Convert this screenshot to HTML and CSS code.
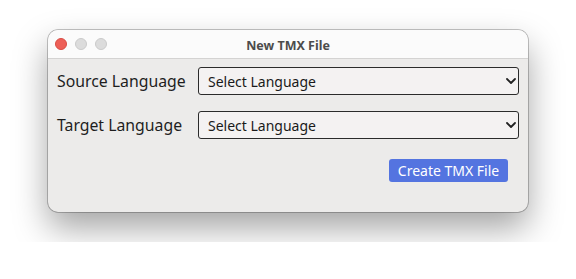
FILE: index.html
```html
<!DOCTYPE html>
<html>
<head>
<meta charset="utf-8">
<link rel="stylesheet" href="styles.css">
</head>
<body>
<div class="window">
  <div class="titlebar">
    <div class="lights">
      <span class="light red"></span>
      <span class="light gray"></span>
      <span class="light gray"></span>
    </div>
    <div class="title">New TMX File</div>
    <div></div>
  </div>
  <div class="content">
    <div class="row">
      <label class="label">Source Language</label>
      <div class="select-wrap">
        <select class="select"><option>Select Language</option></select>
        <svg class="chev" width="10" height="6" viewBox="0 0 10 6"><path d="M1 1 L5 5 L9 1" fill="none" stroke="#222" stroke-width="1.8" stroke-linecap="round" stroke-linejoin="round"/></svg>
      </div>
    </div>
    <div class="row">
      <label class="label">Target Language</label>
      <div class="select-wrap">
        <select class="select"><option>Select Language</option></select>
        <svg class="chev" width="10" height="6" viewBox="0 0 10 6"><path d="M1 1 L5 5 L9 1" fill="none" stroke="#222" stroke-width="1.8" stroke-linecap="round" stroke-linejoin="round"/></svg>
      </div>
    </div>
    <div class="actions">
      <button class="btn">Create TMX File</button>
    </div>
  </div>
</div>
</body>
</html>
```
FILE: styles.css
```css
html, body {
  margin: 0;
  padding: 0;
  background: #ffffff;
}
body {
  padding: 30px 48px;
  font-family: "Noto Sans", "Open Sans", sans-serif;
}
.window {
  width: 480px;
  height: 182px;
  box-sizing: border-box;
  background: #ecebea;
  border-radius: 10px;
  box-shadow: 0 16px 34px rgba(0,0,0,0.36), 0 0 0 0.75px rgba(0,0,0,0.3);
  overflow: hidden;
  display: flex;
  flex-direction: column;
}
.titlebar {
  height: 28px;
  background: #fbfbfb;
  border-bottom: 1px solid #d4d3d2;
  display: grid;
  grid-template-columns: 1fr auto 1fr;
  align-items: center;
}
.lights {
  display: flex;
  gap: 8px;
  padding-left: 7px;
}
.light {
  width: 12px;
  height: 12px;
  border-radius: 50%;
  box-sizing: border-box;
}
.red {
  background: #ed5f57;
  border: 0.5px solid #d84c44;
}
.gray {
  background: #dcdcdc;
  border: 0.5px solid #cacaca;
}
.title {
  font-size: 12.5px;
  font-weight: bold;
  color: #4c4c4c;
  margin-top: 2px;
}
.content {
  padding: 8px 9px 0 9px;
  display: flex;
  flex-direction: column;
}
.row {
  display: flex;
  align-items: center;
  height: 28px;
  margin-bottom: 16px;
}
.label {
  width: 141px;
  font-size: 15.8px;
  color: #1e1e1e;
}
.select-wrap {
  position: relative;
  flex: 1;
}
.select {
  appearance: none;
  -webkit-appearance: none;
  width: 100%;
  height: 28px;
  box-sizing: border-box;
  background: #f4f2f2;
  border: 1px solid #2b2b2b;
  border-radius: 3px;
  padding: 0 9px;
  font-family: "Noto Sans", "Open Sans", sans-serif;
  font-size: 14px;
  color: #1a1a1a;
  outline: none;
}
.chev {
  position: absolute;
  right: 3px;
  top: 11px;
  pointer-events: none;
}
.actions {
  display: flex;
  justify-content: flex-end;
  padding-right: 11px;
  margin-top: 4px;
}
.btn {
  width: 119px;
  height: 23px;
  background: #5474e0;
  color: #ffffff;
  border: none;
  border-radius: 3px;
  font-family: "Noto Sans", "Open Sans", sans-serif;
  font-size: 14px;
  padding: 0;
}
```
